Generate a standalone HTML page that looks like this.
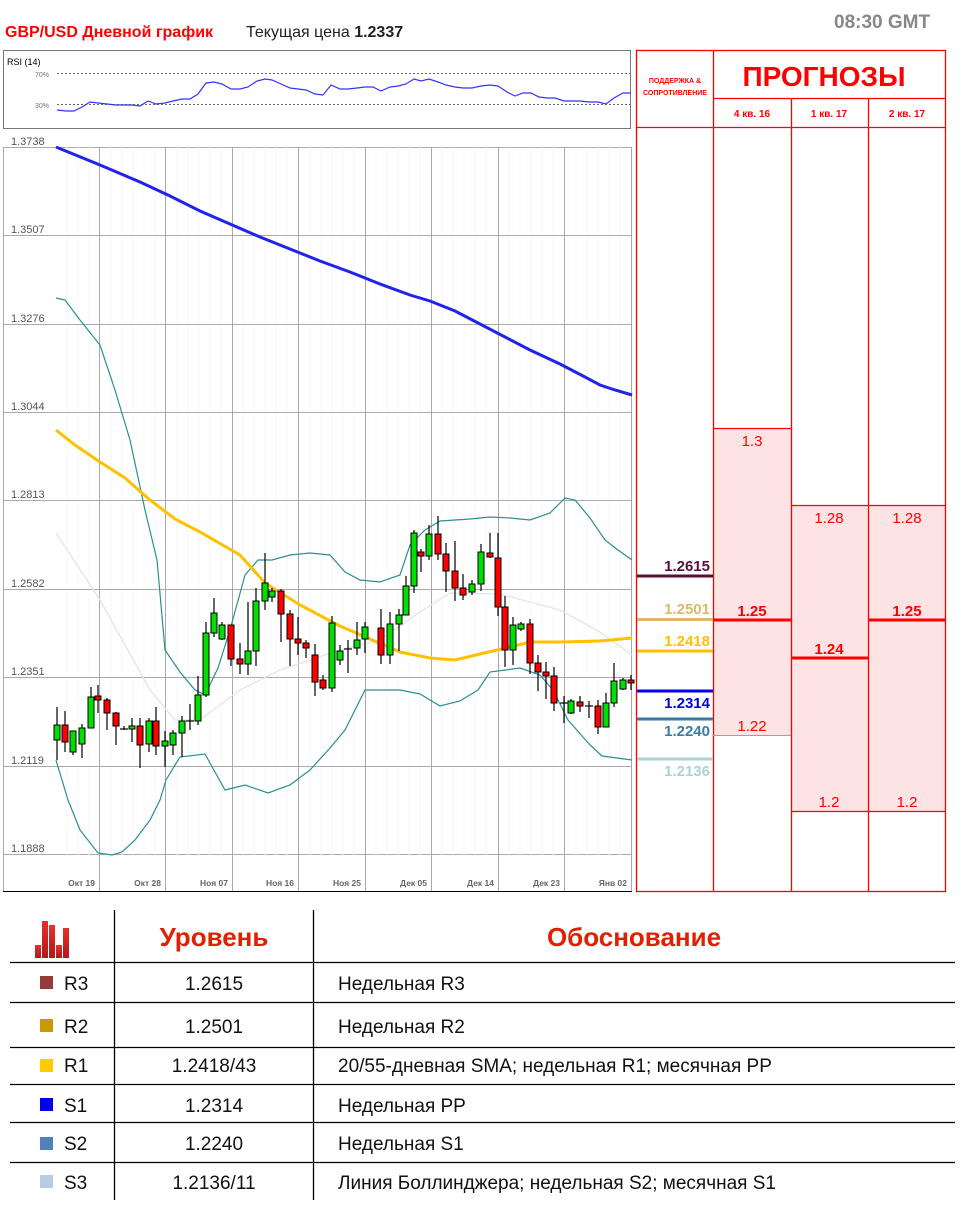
<!DOCTYPE html>
<html><head><meta charset="utf-8"><style>
body{margin:0;width:970px;height:1206px;background:#fff;position:relative;overflow:hidden;font-family:"Liberation Sans","DejaVu Sans",sans-serif}
.a{position:absolute;white-space:nowrap}
</style></head><body>
<div class="a" style="left:5px;top:24px;font-size:16px;font-weight:bold;color:#f00">GBP/USD Дневной график</div>
<div class="a" style="left:246px;top:24px;font-size:16px;color:#222">Текущая цена <b>1.2337</b></div>
<div class="a" style="left:834px;top:12px;font-size:19px;font-weight:bold;color:#888">08:30 GMT</div>

<svg class="a" style="left:0;top:0" width="970" height="900" xmlns="http://www.w3.org/2000/svg">
<rect x="3.5" y="50.5" width="627" height="78" fill="#fff" stroke="#777"/>
<text x="7" y="65" font-size="9" fill="#000" font-family="Liberation Sans">RSI (14)</text>
<text x="35" y="77" font-size="7" fill="#777" font-family="Liberation Sans">70%</text>
<text x="35" y="108" font-size="7" fill="#777" font-family="Liberation Sans">30%</text>
<line x1="57" y1="73.5" x2="630" y2="73.5" stroke="#666" stroke-dasharray="2,2"/>
<line x1="57" y1="104.5" x2="630" y2="104.5" stroke="#666" stroke-dasharray="2,2"/>
<polyline fill="none" stroke="#33f" stroke-width="1.2" points="57,110 66,111 74,111 82,107 90,102 98,103 107,104 116,105 124,105 132,105 140,106 148,101 156,104 165,103 173,101 182,99 190,99 198,94 206,83 214,82 222,84 231,89 240,89 248,87 257,81 265,79 272,80 281,84 290,88 298,89 306,90 315,94 323,95 331,85 340,89 348,89 357,88 365,87 373,87 381,91 390,87 398,86 406,84 414,79 421,81 429,79 438,82 446,85 455,87 463,88 472,88 481,86 490,85 498,86 507,92 515,96 523,93 531,93 539,97 547,98 555,98 564,101 571,101 580,101 589,102 598,102 606,104 614,98 623,93 631,93"/>

<rect x="3.5" y="147.5" width="628" height="707" fill="#fff" stroke="#aaa"/>
<g stroke="#f7f7f7" stroke-width="1">
<line x1="67" y1="147" x2="67" y2="855"/><line x1="78" y1="147" x2="78" y2="855"/><line x1="89" y1="147" x2="89" y2="855"/>
<line x1="111" y1="147" x2="111" y2="855"/><line x1="122" y1="147" x2="122" y2="855"/><line x1="133" y1="147" x2="133" y2="855"/><line x1="144" y1="147" x2="144" y2="855"/><line x1="155" y1="147" x2="155" y2="855"/>
<line x1="177" y1="147" x2="177" y2="855"/><line x1="188" y1="147" x2="188" y2="855"/><line x1="199" y1="147" x2="199" y2="855"/><line x1="210" y1="147" x2="210" y2="855"/><line x1="221" y1="147" x2="221" y2="855"/>
<line x1="243" y1="147" x2="243" y2="855"/><line x1="254" y1="147" x2="254" y2="855"/><line x1="265" y1="147" x2="265" y2="855"/><line x1="276" y1="147" x2="276" y2="855"/><line x1="287" y1="147" x2="287" y2="855"/>
<line x1="310" y1="147" x2="310" y2="855"/><line x1="321" y1="147" x2="321" y2="855"/><line x1="332" y1="147" x2="332" y2="855"/><line x1="343" y1="147" x2="343" y2="855"/><line x1="354" y1="147" x2="354" y2="855"/>
<line x1="376" y1="147" x2="376" y2="855"/><line x1="387" y1="147" x2="387" y2="855"/><line x1="398" y1="147" x2="398" y2="855"/><line x1="409" y1="147" x2="409" y2="855"/><line x1="420" y1="147" x2="420" y2="855"/>
<line x1="442" y1="147" x2="442" y2="855"/><line x1="453" y1="147" x2="453" y2="855"/><line x1="464" y1="147" x2="464" y2="855"/><line x1="475" y1="147" x2="475" y2="855"/><line x1="486" y1="147" x2="486" y2="855"/>
<line x1="509" y1="147" x2="509" y2="855"/><line x1="520" y1="147" x2="520" y2="855"/><line x1="531" y1="147" x2="531" y2="855"/><line x1="542" y1="147" x2="542" y2="855"/><line x1="553" y1="147" x2="553" y2="855"/>
<line x1="576" y1="147" x2="576" y2="855"/><line x1="587" y1="147" x2="587" y2="855"/><line x1="598" y1="147" x2="598" y2="855"/><line x1="609" y1="147" x2="609" y2="855"/><line x1="620" y1="147" x2="620" y2="855"/>
</g>
<g stroke="#aaa" stroke-width="1">
<line x1="99.5" y1="147" x2="99.5" y2="892"/><line x1="165.5" y1="147" x2="165.5" y2="892"/><line x1="232.5" y1="147" x2="232.5" y2="892"/><line x1="298.5" y1="147" x2="298.5" y2="892"/><line x1="365.5" y1="147" x2="365.5" y2="892"/><line x1="431.5" y1="147" x2="431.5" y2="892"/><line x1="498.5" y1="147" x2="498.5" y2="892"/><line x1="564.5" y1="147" x2="564.5" y2="892"/><line x1="631.5" y1="147" x2="631.5" y2="892"/>
<line x1="3" y1="235.5" x2="632" y2="235.5"/><line x1="3" y1="324.5" x2="632" y2="324.5"/><line x1="3" y1="412.5" x2="632" y2="412.5"/><line x1="3" y1="500.5" x2="632" y2="500.5"/><line x1="3" y1="589.5" x2="632" y2="589.5"/><line x1="3" y1="677.5" x2="632" y2="677.5"/><line x1="3" y1="766.5" x2="632" y2="766.5"/>
<line x1="3.5" y1="147" x2="3.5" y2="892"/>
</g>
<line x1="3" y1="891.5" x2="632" y2="891.5" stroke="#000"/>
<g font-size="11" fill="#555" font-family="Liberation Sans">
<text x="11" y="145">1.3738</text><text x="11" y="233">1.3507</text><text x="11" y="322">1.3276</text><text x="11" y="410">1.3044</text><text x="11" y="498">1.2813</text><text x="11" y="587">1.2582</text><text x="11" y="675">1.2351</text><text x="11" y="764">1.2119</text><text x="11" y="852">1.1888</text>
</g>
<g font-size="8.5" fill="#666" font-weight="bold" font-family="Liberation Sans" text-anchor="end">
<text x="95" y="886">Окт 19</text><text x="161" y="886">Окт 28</text><text x="228" y="886">Ноя 07</text><text x="294" y="886">Ноя 16</text><text x="361" y="886">Ноя 25</text><text x="427" y="886">Дек 05</text><text x="494" y="886">Дек 14</text><text x="560" y="886">Дек 23</text><text x="627" y="886">Янв 02</text>
</g>

<polyline fill="none" stroke="#e4e4e4" stroke-width="1.3" points="56,533 100,600 150,690 175,720 200,720 240,690 280,670 340,650 380,640 420,612 450,593 500,594 560,610 600,632 632,655"/>
<polyline fill="none" stroke="#2a9090" stroke-width="1.2" points="56,298 65,300 80,320 100,345 115,390 130,440 145,510 157,560 165,650 180,672 195,690 205,695 218,668 230,630 245,575 258,560 272,560 290,555 310,553 330,555 345,572 360,580 380,582 400,575 410,545 425,530 440,521 470,519 490,517 510,518 530,520 550,513 565,498 575,500 590,518 605,540 618,550 632,560"/>
<polyline fill="none" stroke="#2a9090" stroke-width="1.2" points="56,760 68,800 80,830 98,853 112,855 122,852 135,840 150,820 160,800 166,780 180,757 205,754 225,790 245,785 268,793 290,785 310,770 330,748 345,730 365,690 400,690 420,694 440,706 460,701 478,690 490,672 520,668 540,675 553,690 568,720 590,745 602,756 632,760"/>
<polyline fill="none" stroke="#ffc000" stroke-width="3" points="56,430 75,445 100,462 125,478 150,500 175,519 200,532 240,555 265,583 300,605 340,626 400,652 430,658 455,660 480,654 510,647 530,642 560,642 600,641 632,638"/>
<polyline fill="none" stroke="#2222ee" stroke-width="3" points="56,147 100,165 140,182 170,196 200,211 230,224 260,237 290,249 320,261 350,272 380,284 410,295 430,301 455,311 480,324 505,337 530,350 560,364 585,377 600,385 615,390 632,395"/>

<g stroke="#000" stroke-width="1.2">
<line x1="57" y1="707" x2="57" y2="760"/><line x1="65" y1="711" x2="65" y2="752"/><line x1="73" y1="731" x2="73" y2="755"/><line x1="82" y1="724" x2="82" y2="758"/><line x1="91" y1="687" x2="91" y2="728"/><line x1="98" y1="685" x2="98" y2="713"/><line x1="107" y1="698" x2="107" y2="730"/><line x1="116" y1="712" x2="116" y2="745"/><line x1="124" y1="726" x2="124" y2="730"/><line x1="132" y1="718" x2="132" y2="742"/><line x1="140" y1="718" x2="140" y2="768"/><line x1="149" y1="718" x2="149" y2="752"/><line x1="156" y1="707" x2="156" y2="755"/><line x1="165" y1="731" x2="165" y2="767"/><line x1="173" y1="730" x2="173" y2="755"/><line x1="182" y1="716" x2="182" y2="757"/><line x1="190" y1="704" x2="190" y2="730"/><line x1="198" y1="676" x2="198" y2="725"/><line x1="206" y1="622" x2="206" y2="697"/><line x1="214" y1="598" x2="214" y2="637"/><line x1="222" y1="622" x2="222" y2="640"/><line x1="231" y1="625" x2="231" y2="666"/><line x1="240" y1="643" x2="240" y2="674"/><line x1="248" y1="602" x2="248" y2="675"/><line x1="256" y1="588" x2="256" y2="666"/><line x1="265" y1="553" x2="265" y2="610"/><line x1="272" y1="588" x2="272" y2="602"/><line x1="281" y1="589" x2="281" y2="642"/><line x1="290" y1="610" x2="290" y2="666"/><line x1="298" y1="617" x2="298" y2="655"/><line x1="306" y1="640" x2="306" y2="658"/><line x1="315" y1="644" x2="315" y2="696"/><line x1="323" y1="675" x2="323" y2="690"/><line x1="332" y1="616" x2="332" y2="692"/><line x1="340" y1="645" x2="340" y2="665"/><line x1="348" y1="640" x2="348" y2="673"/><line x1="357" y1="622" x2="357" y2="655"/><line x1="365" y1="622" x2="365" y2="653"/><line x1="381" y1="609" x2="381" y2="664"/><line x1="390" y1="612" x2="390" y2="664"/><line x1="399" y1="609" x2="399" y2="651"/><line x1="406" y1="576" x2="406" y2="615"/><line x1="414" y1="530" x2="414" y2="593"/><line x1="421" y1="549" x2="421" y2="572"/><line x1="429" y1="525" x2="429" y2="560"/><line x1="438" y1="516" x2="438" y2="560"/><line x1="446" y1="543" x2="446" y2="592"/><line x1="455" y1="541" x2="455" y2="601"/><line x1="463" y1="574" x2="463" y2="600"/><line x1="472" y1="580" x2="472" y2="595"/><line x1="481" y1="544" x2="481" y2="591"/><line x1="490" y1="533" x2="490" y2="558"/><line x1="498" y1="533" x2="498" y2="616"/><line x1="505" y1="596" x2="505" y2="667"/><line x1="513" y1="617" x2="513" y2="665"/><line x1="521" y1="622" x2="521" y2="631"/><line x1="530" y1="619" x2="530" y2="674"/><line x1="538" y1="655" x2="538" y2="691"/><line x1="546" y1="662" x2="546" y2="699"/><line x1="554" y1="667" x2="554" y2="711"/><line x1="564" y1="696" x2="564" y2="723"/><line x1="571" y1="699" x2="571" y2="714"/><line x1="580" y1="696" x2="580" y2="712"/><line x1="589" y1="701" x2="589" y2="718"/><line x1="598" y1="700" x2="598" y2="734"/><line x1="606" y1="693" x2="606" y2="727"/><line x1="614" y1="663" x2="614" y2="707"/><line x1="623" y1="678" x2="623" y2="690"/><line x1="631" y1="675" x2="631" y2="690"/>
</g>
<g stroke="#000" stroke-width="1" fill="#00e000">
<rect x="54" y="725" width="6" height="15"/><rect x="70" y="731" width="6" height="21"/><rect x="79" y="728" width="6" height="16"/><rect x="88" y="697" width="6" height="31"/><rect x="129" y="726" width="6" height="3"/><rect x="146" y="721" width="6" height="23"/><rect x="162" y="741" width="6" height="5"/><rect x="170" y="733" width="6" height="12"/><rect x="179" y="721" width="6" height="12"/><rect x="195" y="695" width="6" height="26"/><rect x="203" y="633" width="6" height="62"/><rect x="211" y="613" width="6" height="20"/><rect x="219" y="625" width="6" height="14"/><rect x="245" y="651" width="6" height="13"/><rect x="253" y="601" width="6" height="50"/><rect x="262" y="583" width="6" height="18"/><rect x="269" y="591" width="6" height="6"/><rect x="329" y="623" width="6" height="65"/><rect x="337" y="651" width="6" height="9"/><rect x="354" y="640" width="6" height="8"/><rect x="362" y="627" width="6" height="12"/><rect x="387" y="624" width="6" height="31"/><rect x="396" y="615" width="6" height="9"/><rect x="403" y="586" width="6" height="29"/><rect x="411" y="533" width="6" height="53"/><rect x="426" y="534" width="6" height="22"/><rect x="469" y="584" width="6" height="8"/><rect x="478" y="552" width="6" height="32"/><rect x="510" y="625" width="6" height="25"/><rect x="518" y="624" width="6" height="5"/><rect x="568" y="701" width="6" height="12"/><rect x="603" y="703" width="6" height="24"/><rect x="611" y="681" width="6" height="22"/><rect x="620" y="680" width="6" height="9"/>
</g>
<g stroke="#000" stroke-width="1" fill="#f00">
<rect x="62" y="725" width="6" height="17"/><rect x="95" y="696" width="6" height="4"/><rect x="104" y="700" width="6" height="13"/><rect x="113" y="713" width="6" height="13"/><rect x="137" y="726" width="6" height="19"/><rect x="153" y="721" width="6" height="25"/><rect x="228" y="625" width="6" height="34"/><rect x="237" y="659" width="6" height="5"/><rect x="278" y="591" width="6" height="23"/><rect x="287" y="614" width="6" height="25"/><rect x="295" y="639" width="6" height="4"/><rect x="303" y="643" width="6" height="5"/><rect x="312" y="655" width="6" height="27"/><rect x="320" y="680" width="6" height="8"/><rect x="378" y="628" width="6" height="27"/><rect x="418" y="552" width="6" height="4"/><rect x="435" y="534" width="6" height="20"/><rect x="443" y="554" width="6" height="17"/><rect x="452" y="571" width="6" height="17"/><rect x="460" y="588" width="6" height="7"/><rect x="487" y="553" width="6" height="4"/><rect x="495" y="558" width="6" height="49"/><rect x="502" y="607" width="6" height="43"/><rect x="527" y="624" width="6" height="39"/><rect x="535" y="663" width="6" height="9"/><rect x="543" y="672" width="6" height="4"/><rect x="551" y="676" width="6" height="27"/><rect x="577" y="702" width="6" height="4"/><rect x="595" y="706" width="6" height="21"/><rect x="628" y="680" width="6" height="3"/>
</g>
<g stroke="#000" stroke-width="1.2"><line x1="120" y1="729" x2="128" y2="729"/><line x1="186" y1="721" x2="194" y2="721"/><line x1="344" y1="649" x2="352" y2="649"/><line x1="560" y1="703" x2="568" y2="703"/><line x1="585" y1="706" x2="593" y2="706"/></g>

<rect x="714" y="428" width="77" height="307" fill="#fde3e3"/>
<rect x="792" y="505" width="77" height="306" fill="#fde3e3"/>
<rect x="869" y="505" width="76" height="306" fill="#fde3e3"/>
<g stroke="#f00" stroke-width="1.3" fill="none">
<rect x="636.5" y="50.5" width="309" height="841"/>
<line x1="713.5" y1="50" x2="713.5" y2="892"/>
<line x1="791.5" y1="98" x2="791.5" y2="892"/>
<line x1="868.5" y1="98" x2="868.5" y2="892"/>
<line x1="713" y1="98.5" x2="946" y2="98.5"/>
<line x1="636" y1="127.5" x2="946" y2="127.5"/>
<line x1="713" y1="428.5" x2="791" y2="428.5"/>
<line x1="791" y1="505.5" x2="946" y2="505.5"/>
<line x1="791" y1="811.5" x2="946" y2="811.5"/>
</g>
<line x1="713" y1="735.5" x2="791" y2="735.5" stroke="#f08080" stroke-width="1"/>
<g stroke="#f00" stroke-width="3"><line x1="713" y1="620" x2="791" y2="620"/><line x1="791" y1="658" x2="868" y2="658"/><line x1="868" y1="620" x2="946" y2="620"/></g>
<text x="824" y="86" font-size="28" font-weight="bold" fill="#f00" text-anchor="middle" font-family="Liberation Sans">ПРОГНОЗЫ</text>
<g font-size="7" font-weight="bold" fill="#f00" text-anchor="middle" font-family="Liberation Sans">
<text x="675" y="83">ПОДДЕРЖКА &amp;</text><text x="675" y="95">СОПРОТИВЛЕНИЕ</text></g>
<g font-size="10" font-weight="bold" fill="#f00" text-anchor="middle" font-family="Liberation Sans">
<text x="752" y="117">4 кв. 16</text><text x="829" y="117">1 кв. 17</text><text x="907" y="117">2 кв. 17</text></g>
<g font-size="15" fill="#f00" text-anchor="middle" font-family="Liberation Sans">
<text x="752" y="446">1.3</text><text x="752" y="731">1.22</text><text x="829" y="523">1.28</text><text x="907" y="523">1.28</text><text x="829" y="807">1.2</text><text x="907" y="807">1.2</text></g>
<g font-size="15" font-weight="bold" fill="#f00" text-anchor="middle" font-family="Liberation Sans">
<text x="752" y="616">1.25</text><text x="829" y="654">1.24</text><text x="907" y="616">1.25</text></g>
<g stroke-width="3"><line x1="637" y1="576" x2="713" y2="576" stroke="#5a0f3a"/><line x1="637" y1="619.5" x2="713" y2="619.5" stroke="#dcb86a"/><line x1="637" y1="651" x2="713" y2="651" stroke="#ffc000"/><line x1="637" y1="691" x2="713" y2="691" stroke="#0000ee"/><line x1="637" y1="719" x2="713" y2="719" stroke="#3a7ca8"/><line x1="637" y1="759" x2="713" y2="759" stroke="#a8d4d4"/></g>
<g font-size="15" font-weight="bold" text-anchor="end" font-family="Liberation Sans">
<text x="710" y="571" fill="#5a0f3a">1.2615</text><text x="710" y="614" fill="#dcb86a">1.2501</text><text x="710" y="646" fill="#ffc000">1.2418</text><text x="710" y="708" fill="#0000ee">1.2314</text><text x="710" y="736" fill="#3a7ca8">1.2240</text><text x="710" y="776" fill="#a8d4d4">1.2136</text></g>
</svg>

<svg class="a" style="left:0;top:900px" width="970" height="306" xmlns="http://www.w3.org/2000/svg">
<defs><linearGradient id="g" x1="0" y1="0" x2="0" y2="1"><stop offset="0" stop-color="#e83030"/><stop offset="1" stop-color="#b01818"/></linearGradient></defs>
<g fill="url(#g)"><rect x="35" y="45" width="6" height="13"/><rect x="42" y="21" width="6" height="37"/><rect x="49" y="25" width="6" height="33"/><rect x="56" y="45" width="6" height="13"/><rect x="63" y="28" width="6" height="30"/></g>
<g stroke="#000" stroke-width="1.3">
<line x1="114.5" y1="10" x2="114.5" y2="300"/><line x1="313.5" y1="10" x2="313.5" y2="300"/>
<line x1="10" y1="62.5" x2="955" y2="62.5"/><line x1="10" y1="102.5" x2="955" y2="102.5"/><line x1="10" y1="147.5" x2="955" y2="147.5"/><line x1="10" y1="184.5" x2="955" y2="184.5"/><line x1="10" y1="222.5" x2="955" y2="222.5"/><line x1="10" y1="262.5" x2="955" y2="262.5"/>
</g>
<g font-family="Liberation Sans" font-weight="bold" font-size="26" fill="#e02000" text-anchor="middle"><text x="214" y="46">Уровень</text><text x="634" y="46">Обоснование</text></g>
<rect x="40" y="76" width="13" height="13" fill="#943b3b"/><rect x="40" y="119" width="13" height="13" fill="#c99a00"/><rect x="40" y="159" width="13" height="13" fill="#ffcc00"/><rect x="40" y="198" width="13" height="13" fill="#0000ee"/><rect x="40" y="237" width="13" height="13" fill="#4f81bd"/><rect x="40" y="275" width="13" height="13" fill="#b8cce4"/>
<g font-family="Liberation Sans" font-size="19" fill="#111">
<text x="64" y="90">R3</text><text x="64" y="133">R2</text><text x="64" y="172">R1</text><text x="64" y="212">S1</text><text x="64" y="250">S2</text><text x="64" y="289">S3</text>
<g text-anchor="middle"><text x="214" y="90">1.2615</text><text x="214" y="133">1.2501</text><text x="214" y="172">1.2418/43</text><text x="214" y="212">1.2314</text><text x="214" y="250">1.2240</text><text x="214" y="289">1.2136/11</text></g>
<text x="338" y="90">Недельная R3</text><text x="338" y="133">Недельная R2</text><text x="338" y="172">20/55-дневная SMA; недельная R1; месячная PP</text><text x="338" y="212">Недельная PP</text><text x="338" y="250">Недельная S1</text><text x="338" y="289">Линия Боллинджера; недельная S2; месячная S1</text>
</g>
</svg>
</body></html>
